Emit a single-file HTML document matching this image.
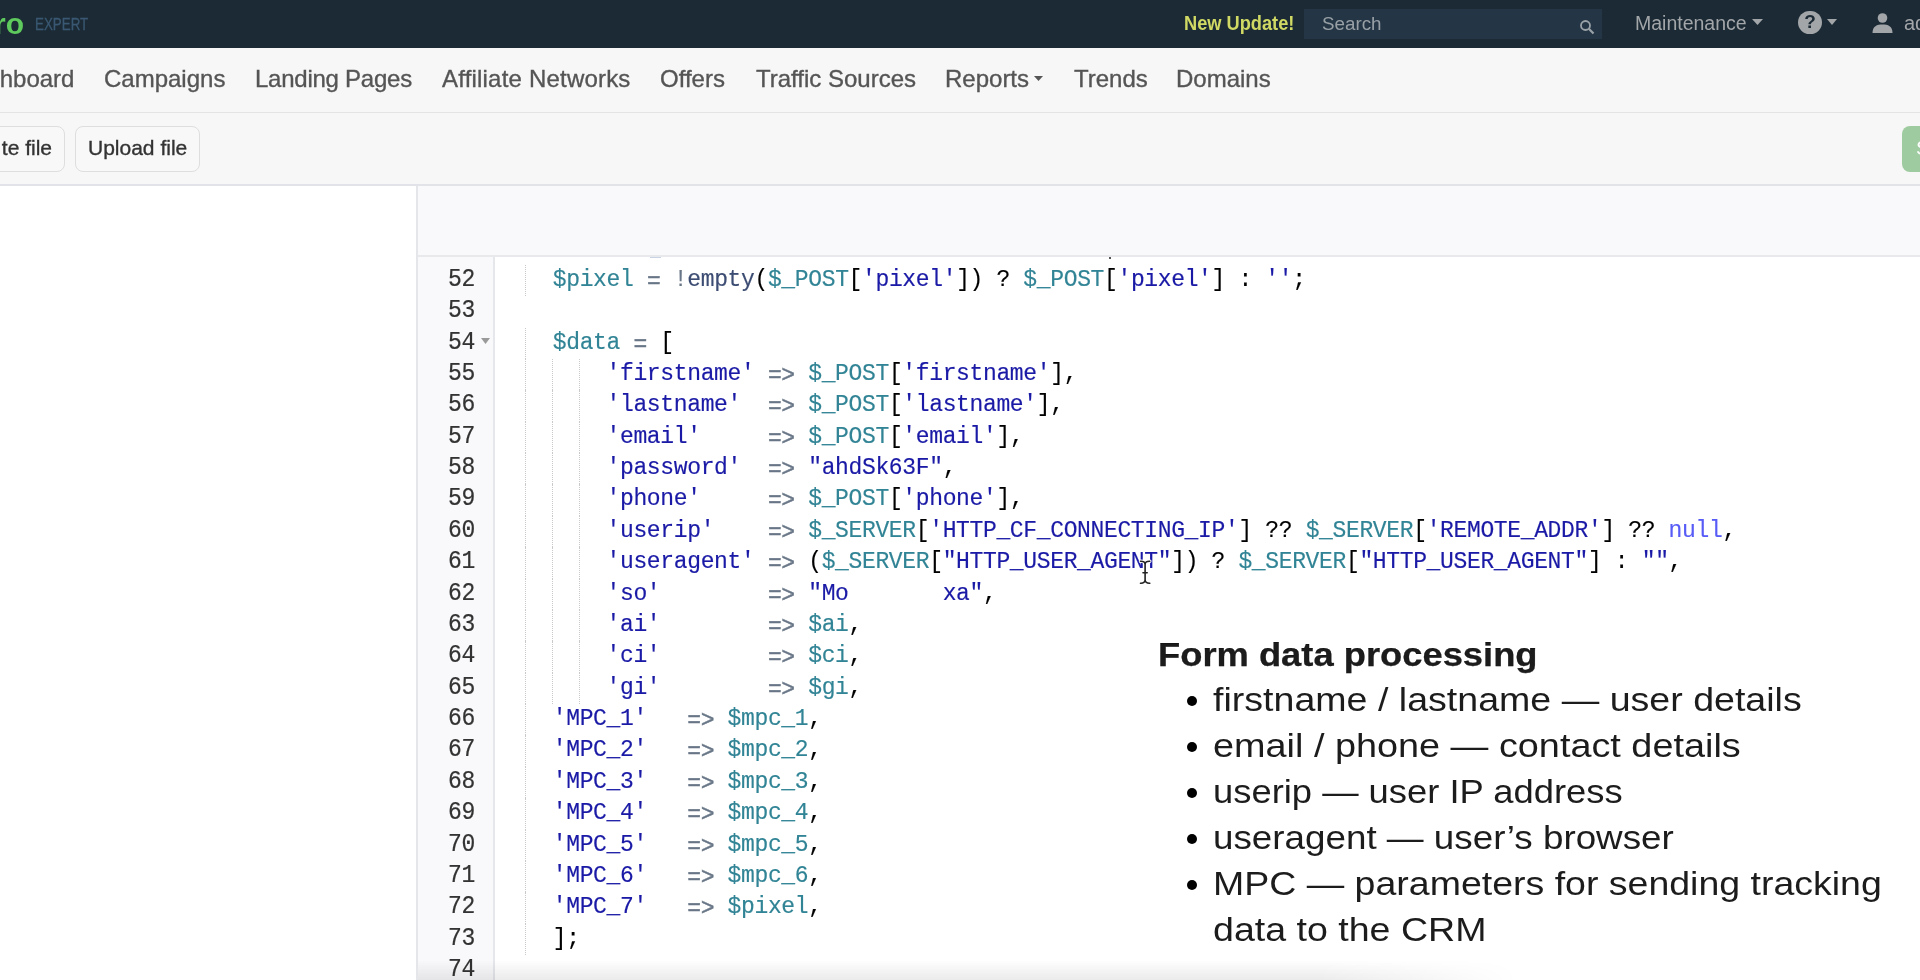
<!DOCTYPE html>
<html><head><meta charset="utf-8">
<style>
*{margin:0;padding:0;box-sizing:border-box}
html,body{width:1920px;height:980px;overflow:hidden;background:#fff;font-family:"Liberation Sans",sans-serif}
.abs{position:absolute;white-space:nowrap}
#top{position:absolute;left:0;top:0;width:1920px;height:48px;background:#1b2a34}
#nav{position:absolute;left:0;top:48px;width:1920px;height:65px;background:#f7f7f7;border-bottom:1px solid #e4e4e6}
#tool{position:absolute;left:0;top:113px;width:1920px;height:73px;background:#f7f7f7;border-bottom:2px solid #e2e3e8}
.nav{position:absolute;margin-top:-1.6px;-webkit-text-stroke:0.35px #555;font-size:24px;color:#555;line-height:1;white-space:nowrap}
.btn{position:absolute;top:126px;height:46px;border:1px solid #dedede;border-radius:8px;background:#f8f8f8;font-size:21px;color:#333;-webkit-text-stroke:0.35px #333}
#left{position:absolute;left:0;top:186px;width:418px;height:794px;background:#fff;border-right:2px solid #e4e6ea}
#edhead{position:absolute;left:418px;top:186px;width:1502px;height:71px;background:#f9f9fb;border-bottom:2px solid #e8e9ed}
#gutter{position:absolute;left:418px;top:257px;width:77px;height:723px;background:#f9f9fb;border-right:2px solid #e6e7eb}
.ln{position:absolute;left:417px;width:58px;transform:scaleY(1.1);transform-origin:0 21.8px;-webkit-text-stroke:0.2px #333;text-align:right;font-family:"Liberation Mono",monospace;font-size:23px;color:#333;letter-spacing:-0.36px;line-height:31.37px;height:31.37px}
.cl{position:absolute;left:499px;transform:scaleY(1.07);transform-origin:0 21.8px;-webkit-text-stroke:0.15px currentColor;font-family:"Liberation Mono",monospace;font-size:23px;letter-spacing:-0.36px;line-height:31.37px;height:31.37px;white-space:pre;color:#000}
.v{color:#318495}.s{color:#1a1aa6}.o{color:#687687}.a{color:#687687;position:relative;top:2.2px;-webkit-text-stroke:0.4px #687687}.f{color:#3c4c72}.c{color:#585cf6}
.g{position:absolute;width:0;border-left:1px dotted #c9c9c9}
#ov{position:absolute;left:1158px;top:0;color:#000}
.ot{position:absolute;white-space:nowrap;font-size:34px;line-height:1;transform-origin:0 0;color:#1c1c1c}
.bul{position:absolute;width:10px;height:10px;border-radius:50%;background:#000}
</style></head><body><div id="wrap" style="position:absolute;left:0;top:0;width:1920px;height:980px;overflow:hidden;will-change:transform">
<div id="top">
 <div class="abs" style="left:-6px;top:9px;font-size:30px;font-weight:bold;color:#5ec95c;line-height:1">ro</div>
 <div class="abs" style="left:35px;top:16px;font-size:16.2px;color:#3a5872;line-height:1;transform:scaleX(0.825);-webkit-text-stroke:0.3px #3a5872;transform-origin:0 0">EXPERT</div>
 <div class="abs" style="left:1184px;top:14px;font-size:19.4px;font-weight:bold;color:#d0d964;line-height:1;transform:scaleX(0.94);transform-origin:0 0">New Update!</div>
 <div class="abs" style="left:1304px;top:9px;width:298px;height:30px;background:#243646"></div>
 <div class="abs" style="left:1322px;top:15px;font-size:18.8px;color:#98a0a6;line-height:1">Search</div>
 <svg class="abs" style="left:1578px;top:18px" width="18" height="18" viewBox="0 0 18 18"><circle cx="7.5" cy="7.5" r="4.5" fill="none" stroke="#9aa2a8" stroke-width="1.8"/><path d="M10.8 10.8 L15.5 15.5" stroke="#9aa2a8" stroke-width="2.2"/></svg>
 <div class="abs" style="left:1635px;top:13.5px;font-size:19.5px;color:#a3a6a9;line-height:1">Maintenance</div>
 <svg class="abs" style="left:1752px;top:19px" width="12" height="7"><path d="M0 0 L11 0 L5.5 6z" fill="#a3a6a9"/></svg>
 <div class="abs" style="left:1798px;top:10.5px;width:23.5px;height:23.5px;border-radius:50%;background:#a3a6a9"></div>
 <div class="abs" style="left:1803px;top:12px;width:14px;text-align:center;font-size:19px;font-weight:bold;color:#1b2a34;line-height:1">?</div>
 <svg class="abs" style="left:1827px;top:19px" width="11" height="7"><path d="M0 0 L10 0 L5 6z" fill="#a3a6a9"/></svg>
 <svg class="abs" style="left:1872px;top:13px" width="21" height="20" viewBox="0 0 21 20"><circle cx="10.5" cy="5" r="4.8" fill="#a3a6a9"/><path d="M0.5 20 C0.5 13 5 11.5 10.5 11.5 C16 11.5 20.5 13 20.5 20z" fill="#a3a6a9"/></svg>
 <div class="abs" style="left:1904px;top:13px;font-size:20px;color:#a3a6a9;line-height:1">admin</div>
</div>
<div id="nav">
 <div class="nav" style="left:-43px;top:21px">Dashboard</div>
 <div class="nav" style="left:104px;top:21px">Campaigns</div>
 <div class="nav" style="left:255px;top:21px;letter-spacing:-0.25px">Landing Pages</div>
 <div class="nav" style="left:442px;top:21px;letter-spacing:0.2px">Affiliate Networks</div>
 <div class="nav" style="left:660px;top:21px">Offers</div>
 <div class="nav" style="left:756px;top:21px">Traffic Sources</div>
 <div class="nav" style="left:945px;top:21px">Reports</div>
 <svg class="abs" style="left:1034px;top:76px;top:28px" width="10" height="6"><path d="M0 0 L9 0 L4.5 5z" fill="#555"/></svg>
 <div class="nav" style="left:1074px;top:21px">Trends</div>
 <div class="nav" style="left:1176px;top:21px">Domains</div>
</div>
<div id="tool"></div>
<div class="btn" style="left:-60px;width:125px"><span class="abs" style="left:0;top:10px;width:111px;text-align:right;line-height:1">te file</span></div>
<div class="btn" style="left:75px;width:125px"><span class="abs" style="left:12px;top:10px;line-height:1">Upload file</span></div>
<div class="abs" style="left:1902px;top:126px;width:60px;height:46px;border-radius:8px;background:#9ecb9f"><span class="abs" style="left:14px;top:11px;font-size:21px;color:#fff;line-height:1">Save</span></div>
<div id="left"></div>
<div id="edhead"></div>
<div id="gutter"></div>
<div class="ln" style="top:264.90px">52</div>
<div class="cl" style="top:264.90px">    <span class="v">$pixel</span> <span class="a">=</span> <span class="o">!</span><span class="f">empty</span>(<span class="v">$_POST</span>[<span class="s">'pixel'</span>]) ? <span class="v">$_POST</span>[<span class="s">'pixel'</span>] : <span class="s">''</span>;</div>
<div class="g" style="left:525.1px;top:264.90px;height:31.37px"></div>
<div class="ln" style="top:296.27px">53</div>
<div class="cl" style="top:296.27px"></div>
<div class="ln" style="top:327.64px">54</div>
<div class="cl" style="top:327.64px">    <span class="v">$data</span> <span class="a">=</span> [</div>
<div class="g" style="left:525.1px;top:327.64px;height:31.37px"></div>
<div class="ln" style="top:359.01px">55</div>
<div class="cl" style="top:359.01px">        <span class="s">'firstname'</span> <span class="a">=&gt;</span> <span class="v">$_POST</span>[<span class="s">'firstname'</span>],</div>
<div class="g" style="left:525.1px;top:359.01px;height:31.37px"></div>
<div class="g" style="left:552.0px;top:359.01px;height:31.37px"></div>
<div class="g" style="left:578.8px;top:359.01px;height:31.37px"></div>
<div class="ln" style="top:390.38px">56</div>
<div class="cl" style="top:390.38px">        <span class="s">'lastname'</span>  <span class="a">=&gt;</span> <span class="v">$_POST</span>[<span class="s">'lastname'</span>],</div>
<div class="g" style="left:525.1px;top:390.38px;height:31.37px"></div>
<div class="g" style="left:552.0px;top:390.38px;height:31.37px"></div>
<div class="g" style="left:578.8px;top:390.38px;height:31.37px"></div>
<div class="ln" style="top:421.75px">57</div>
<div class="cl" style="top:421.75px">        <span class="s">'email'</span>     <span class="a">=&gt;</span> <span class="v">$_POST</span>[<span class="s">'email'</span>],</div>
<div class="g" style="left:525.1px;top:421.75px;height:31.37px"></div>
<div class="g" style="left:552.0px;top:421.75px;height:31.37px"></div>
<div class="g" style="left:578.8px;top:421.75px;height:31.37px"></div>
<div class="ln" style="top:453.12px">58</div>
<div class="cl" style="top:453.12px">        <span class="s">'password'</span>  <span class="a">=&gt;</span> <span class="s">"ahdSk63F"</span>,</div>
<div class="g" style="left:525.1px;top:453.12px;height:31.37px"></div>
<div class="g" style="left:552.0px;top:453.12px;height:31.37px"></div>
<div class="g" style="left:578.8px;top:453.12px;height:31.37px"></div>
<div class="ln" style="top:484.49px">59</div>
<div class="cl" style="top:484.49px">        <span class="s">'phone'</span>     <span class="a">=&gt;</span> <span class="v">$_POST</span>[<span class="s">'phone'</span>],</div>
<div class="g" style="left:525.1px;top:484.49px;height:31.37px"></div>
<div class="g" style="left:552.0px;top:484.49px;height:31.37px"></div>
<div class="g" style="left:578.8px;top:484.49px;height:31.37px"></div>
<div class="ln" style="top:515.86px">60</div>
<div class="cl" style="top:515.86px">        <span class="s">'userip'</span>    <span class="a">=&gt;</span> <span class="v">$_SERVER</span>[<span class="s">'HTTP_CF_CONNECTING_IP'</span>] ?? <span class="v">$_SERVER</span>[<span class="s">'REMOTE_ADDR'</span>] ?? <span class="c">null</span>,</div>
<div class="g" style="left:525.1px;top:515.86px;height:31.37px"></div>
<div class="g" style="left:552.0px;top:515.86px;height:31.37px"></div>
<div class="g" style="left:578.8px;top:515.86px;height:31.37px"></div>
<div class="ln" style="top:547.23px">61</div>
<div class="cl" style="top:547.23px">        <span class="s">'useragent'</span> <span class="a">=&gt;</span> (<span class="v">$_SERVER</span>[<span class="s">"HTTP_USER_AGENT"</span>]) ? <span class="v">$_SERVER</span>[<span class="s">"HTTP_USER_AGENT"</span>] : <span class="s">""</span>,</div>
<div class="g" style="left:525.1px;top:547.23px;height:31.37px"></div>
<div class="g" style="left:552.0px;top:547.23px;height:31.37px"></div>
<div class="g" style="left:578.8px;top:547.23px;height:31.37px"></div>
<div class="ln" style="top:578.60px">62</div>
<div class="cl" style="top:578.60px">        <span class="s">'so'</span>        <span class="a">=&gt;</span> <span class="s">"Mo       xa"</span>,</div>
<div class="g" style="left:525.1px;top:578.60px;height:31.37px"></div>
<div class="g" style="left:552.0px;top:578.60px;height:31.37px"></div>
<div class="g" style="left:578.8px;top:578.60px;height:31.37px"></div>
<div class="ln" style="top:609.97px">63</div>
<div class="cl" style="top:609.97px">        <span class="s">'ai'</span>        <span class="a">=&gt;</span> <span class="v">$ai</span>,</div>
<div class="g" style="left:525.1px;top:609.97px;height:31.37px"></div>
<div class="g" style="left:552.0px;top:609.97px;height:31.37px"></div>
<div class="g" style="left:578.8px;top:609.97px;height:31.37px"></div>
<div class="ln" style="top:641.34px">64</div>
<div class="cl" style="top:641.34px">        <span class="s">'ci'</span>        <span class="a">=&gt;</span> <span class="v">$ci</span>,</div>
<div class="g" style="left:525.1px;top:641.34px;height:31.37px"></div>
<div class="g" style="left:552.0px;top:641.34px;height:31.37px"></div>
<div class="g" style="left:578.8px;top:641.34px;height:31.37px"></div>
<div class="ln" style="top:672.71px">65</div>
<div class="cl" style="top:672.71px">        <span class="s">'gi'</span>        <span class="a">=&gt;</span> <span class="v">$gi</span>,</div>
<div class="g" style="left:525.1px;top:672.71px;height:31.37px"></div>
<div class="g" style="left:552.0px;top:672.71px;height:31.37px"></div>
<div class="g" style="left:578.8px;top:672.71px;height:31.37px"></div>
<div class="ln" style="top:704.08px">66</div>
<div class="cl" style="top:704.08px">    <span class="s">'MPC_1'</span>   <span class="a">=&gt;</span> <span class="v">$mpc_1</span>,</div>
<div class="g" style="left:525.1px;top:704.08px;height:31.37px"></div>
<div class="ln" style="top:735.45px">67</div>
<div class="cl" style="top:735.45px">    <span class="s">'MPC_2'</span>   <span class="a">=&gt;</span> <span class="v">$mpc_2</span>,</div>
<div class="g" style="left:525.1px;top:735.45px;height:31.37px"></div>
<div class="ln" style="top:766.82px">68</div>
<div class="cl" style="top:766.82px">    <span class="s">'MPC_3'</span>   <span class="a">=&gt;</span> <span class="v">$mpc_3</span>,</div>
<div class="g" style="left:525.1px;top:766.82px;height:31.37px"></div>
<div class="ln" style="top:798.19px">69</div>
<div class="cl" style="top:798.19px">    <span class="s">'MPC_4'</span>   <span class="a">=&gt;</span> <span class="v">$mpc_4</span>,</div>
<div class="g" style="left:525.1px;top:798.19px;height:31.37px"></div>
<div class="ln" style="top:829.56px">70</div>
<div class="cl" style="top:829.56px">    <span class="s">'MPC_5'</span>   <span class="a">=&gt;</span> <span class="v">$mpc_5</span>,</div>
<div class="g" style="left:525.1px;top:829.56px;height:31.37px"></div>
<div class="ln" style="top:860.93px">71</div>
<div class="cl" style="top:860.93px">    <span class="s">'MPC_6'</span>   <span class="a">=&gt;</span> <span class="v">$mpc_6</span>,</div>
<div class="g" style="left:525.1px;top:860.93px;height:31.37px"></div>
<div class="ln" style="top:892.30px">72</div>
<div class="cl" style="top:892.30px">    <span class="s">'MPC_7'</span>   <span class="a">=&gt;</span> <span class="v">$pixel</span>,</div>
<div class="g" style="left:525.1px;top:892.30px;height:31.37px"></div>
<div class="ln" style="top:923.67px">73</div>
<div class="cl" style="top:923.67px">    ];</div>
<div class="g" style="left:525.1px;top:923.67px;height:31.37px"></div>
<div class="ln" style="top:955.04px">74</div>
<div class="cl" style="top:955.04px"></div>
<div class="abs" style="left:650px;top:257px;width:11px;height:1px;background:#c9d3e3"></div><div class="abs" style="left:1109px;top:257px;width:2px;height:2px;background:#555"></div>
<svg class="abs" style="left:480px;top:337px" width="11" height="8"><path d="M1 1 L10 1 L5.5 7z" fill="#9a9a9a"/></svg>
<svg class="abs" style="left:1135px;top:555px" width="20" height="34" viewBox="1135 555 20 34"><g fill="none" stroke-linecap="round"><path d="M1140.5 561.2 Q1145 561 1145.1 564.5 Q1145.2 561 1149.8 561.2 M1145.1 564.5 L1145.1 579.8 M1140.5 583.2 Q1145 583.4 1145.1 579.8 Q1145.2 583.4 1149.8 583.2 M1143 572.8 L1147.2 572.8" stroke="#fff" stroke-width="3.5"/><path d="M1140.5 561.2 Q1145 561 1145.1 564.5 Q1145.2 561 1149.8 561.2 M1145.1 564.5 L1145.1 579.8 M1140.5 583.2 Q1145 583.4 1145.1 579.8 Q1145.2 583.4 1149.8 583.2 M1143 572.8 L1147.2 572.8" stroke="#222" stroke-width="1.6"/></g></svg>
<div class="abs" style="left:418px;top:960px;width:1100px;height:20px;background:linear-gradient(to bottom,rgba(0,0,0,0),rgba(0,0,0,0.08));-webkit-mask-image:linear-gradient(to right,#000 0,#000 900px,transparent 1100px)"></div>
<div id="ov">
 <div class="ot" style="left:0;top:638px;font-size:33px;font-weight:bold;-webkit-text-stroke:0.25px #000;transform:scaleX(1.1009)">Form data processing</div>
 <div class="bul" style="left:29px;top:696.0px"></div><div class="ot" style="left:55px;top:682.0px;transform:scaleX(1.1048)">firstname / lastname — user details</div>
 <div class="bul" style="left:29px;top:741.9px"></div><div class="ot" style="left:55px;top:727.9px;transform:scaleX(1.1124)">email / phone — contact details</div>
 <div class="bul" style="left:29px;top:787.8px"></div><div class="ot" style="left:55px;top:773.8px;transform:scaleX(1.0695)">userip — user IP address</div>
 <div class="bul" style="left:29px;top:833.7px"></div><div class="ot" style="left:55px;top:819.7px;transform:scaleX(1.0821)">useragent — user’s browser</div>
 <div class="bul" style="left:29px;top:879.6px"></div><div class="ot" style="left:55px;top:865.6px;transform:scaleX(1.1026)">MPC — parameters for sending tracking</div>
 <div class="ot" style="left:55px;top:911.5px;transform:scaleX(1.1046)">data to the CRM</div>
</div>
</div></body></html>
